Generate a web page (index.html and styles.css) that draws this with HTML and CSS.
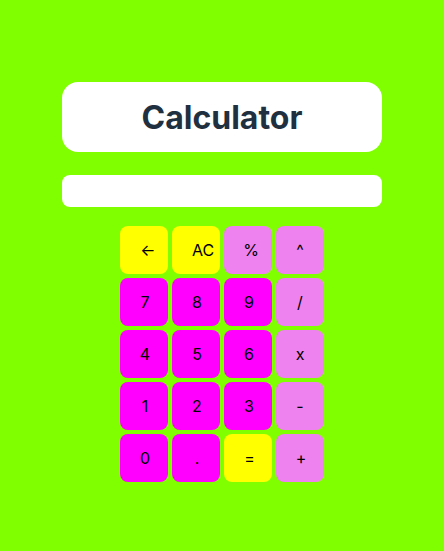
FILE: index.html
```html
<!DOCTYPE html>
<html>
<head>
<meta charset="utf-8">
<link rel="stylesheet" href="styles.css">
</head>
<body>
<main class="app">
  <div class="title-box"><h1 class="title">Calculator</h1></div>
  <div class="display"></div>
  <div class="keys">
    <button class="key yellow back">&#8592;</button>
    <button class="key yellow ac">AC</button>
    <button class="key violet pct">%</button>
    <button class="key violet">^</button>
    <button class="key magenta">7</button>
    <button class="key magenta">8</button>
    <button class="key magenta">9</button>
    <button class="key violet">/</button>
    <button class="key magenta">4</button>
    <button class="key magenta">5</button>
    <button class="key magenta">6</button>
    <button class="key violet">x</button>
    <button class="key magenta">1</button>
    <button class="key magenta">2</button>
    <button class="key magenta">3</button>
    <button class="key violet">-</button>
    <button class="key magenta">0</button>
    <button class="key magenta">.</button>
    <button class="key yellow eq">=</button>
    <button class="key violet plus">+</button>
  </div>
</main>
</body>
</html>
```
FILE: styles.css
```css
html, body {
  margin: 0;
  padding: 0;
  background: #80ff00;
  font-family: Inter, "Liberation Sans", sans-serif;
}
.app {
  width: 320px;
  margin: 0 auto;
  padding-top: 82px;
  display: flex;
  flex-direction: column;
  align-items: center;
}
.title-box {
  width: 320px;
  height: 70px;
  background: #fff;
  border-radius: 16px;
  display: flex;
  align-items: center;
  justify-content: center;
}
.title {
  margin: 0;
  padding-top: 1px;
  font-size: 32px;
  font-weight: 700;
  color: #1f3040;
}
.display {
  width: 320px;
  height: 32px;
  margin-top: 23px;
  background: #fff;
  border-radius: 8px;
}
.keys {
  margin-top: 19px;
  display: grid;
  grid-template-columns: repeat(4, 48px);
  grid-auto-rows: 48px;
  gap: 4px;
}
.key {
  border: none;
  border-radius: 8px;
  padding: 0;
  font-family: Inter, "Liberation Sans", sans-serif;
  font-size: 16px;
  color: #000;
  display: flex;
  align-items: center;
  justify-content: center;
}
.yellow { background: #ffff00; }
.magenta { background: #ff00ff; padding-left: 2px; }
.violet { background: #ee82ee; }
.back { padding-left: 8px; }
.ac { padding-left: 14px; }
.pct { padding-left: 6px; }
.eq { padding-left: 3px; }
.plus { padding-left: 2px; }
```
